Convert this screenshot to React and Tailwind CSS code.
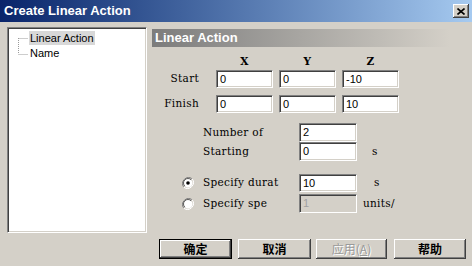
import React from 'react';

const sunken = 'border border-t-[#808080] border-l-[#808080] border-b-white border-r-white shadow-[inset_1px_1px_0_#404040,inset_-1px_-1px_0_#d4d0c8]';
const raised = 'shadow-[inset_-1px_-1px_0_#404040,inset_1px_1px_0_#ffffff,inset_-2px_-2px_0_#808080]';
const label = "font-['DejaVu_Serif',serif] text-[10.5px] tracking-[0.3px] text-black";
const sans = "font-['Liberation_Sans',Arial,sans-serif]";

function Field({ value, width = 'w-[57px]', height = 'h-[18px]', disabled }) {
    return (
        <div className={`${width} ${height} ${sunken} ${disabled ? 'bg-[#d4d0c8] text-[#a0a0a0]' : 'bg-white text-black'} ${sans} text-[11px] flex items-center pl-[3px]`}>
            {value}
        </div>
    );
}

function Radio({ checked }) {
    return (
        <svg width="12" height="12" viewBox="0 0 12 12">
            <path d="M10.2 1.8 A6 6 0 0 0 1.8 10.2" fill="none" stroke="#808080" strokeWidth="1" />
            <path d="M1.8 10.2 A6 6 0 0 0 10.2 1.8" fill="none" stroke="#ffffff" strokeWidth="1" />
            <circle cx="6" cy="6" r="4.5" fill="#ffffff" stroke="#404040" strokeWidth="0.8" strokeDasharray="14 14" transform="rotate(135 6 6)" />
            {checked && <circle cx="6" cy="6" r="1.8" fill="#000" />}
        </svg>
    );
}

function Btn({ children, width, isDefault, disabled }) {
    return (
        <div className={`${width} h-[20px] bg-[#d4d0c8] ${isDefault ? 'border border-black' : ''} ${raised} flex items-center justify-center font-['Noto_Sans_CJK_SC',sans-serif] text-[12px] font-bold ${disabled ? 'text-[#9a9a9a] font-normal [text-shadow:1px_1px_0_#fff]' : 'text-black'}`}>
            {children}
        </div>
    );
}

export default function App() {
    return (
        <div className="w-[472px] h-[266px] bg-[#d4d0c8] flex flex-col overflow-hidden">
            {/* title bar */}
            <div className="h-[22px] flex items-center justify-between pl-[4px] pr-[3px] bg-linear-to-r from-[#0a246a] to-[#a6caf0]">
                <span className={`${sans} text-white font-bold text-[13px]`}>Create Linear Action</span>
                <div className={`w-[16px] h-[14px] bg-[#d4d0c8] ${raised} flex items-center justify-center`}>
                    <svg width="8" height="7" viewBox="0 0 8 7">
                        <path d="M0.5 0.5 L7.5 6.5 M7.5 0.5 L0.5 6.5" stroke="#000" strokeWidth="1.6" />
                    </svg>
                </div>
            </div>

            <div className="flex flex-1">
                {/* tree */}
                <div className="w-[152px] pl-[7px] pt-[5px]">
                    <div className={`w-[140px] h-[206px] bg-white ${sunken} pt-[2px] pl-[9px]`}>
                        <div className="flex">
                            <svg width="12" height="32" viewBox="0 0 12 32" className="mt-[1px]">
                                <path d="M1.5 7 V23 M1.5 7.5 H11 M1.5 23.5 H11" stroke="#9a9a9a" strokeWidth="1" strokeDasharray="1 1" fill="none" />
                            </svg>
                            <div className={`${sans} text-[11px] text-black`}>
                                <div className="h-[14px] mt-[1px] px-[1px] bg-[#d8d8d8] flex items-center">Linear Action</div>
                                <div className="h-[16px] px-[1px] flex items-center">Name</div>
                            </div>
                        </div>
                    </div>
                </div>

                {/* right panel */}
                <div className="flex-1 pt-[7px] flex flex-col">
                    <div className={`h-[18px] w-[298px] bg-linear-to-r from-[#7c7c7c] via-[#a8a6a2] to-[#d4d0c8] pl-[3px] flex items-center ${sans} text-white font-bold text-[13px]`}>
                        Linear Action
                    </div>

                    <div className={`mt-[9px] h-[12px] flex items-center pl-[64px] gap-[6px] ${label} font-bold`}>
                        <div className="w-[57px] text-center">X</div>
                        <div className="w-[57px] text-center">Y</div>
                        <div className="w-[57px] text-center">Z</div>
                    </div>

                    <div className="mt-[2px] h-[18px] flex items-center">
                        <div className={`w-[47px] text-right ${label}`}>Start</div>
                        <div className="ml-[17px] flex gap-[6px]">
                            <Field value="0" />
                            <Field value="0" />
                            <Field value="-10" />
                        </div>
                    </div>

                    <div className="mt-[7px] h-[18px] flex items-center">
                        <div className={`w-[47px] text-right ${label}`}>Finish</div>
                        <div className="ml-[17px] flex gap-[6px]">
                            <Field value="0" />
                            <Field value="0" />
                            <Field value="10" />
                        </div>
                    </div>

                    <div className="mt-[10px] flex items-center pl-[51px]">
                        <div className={`w-[96px] ${label}`}>Number of</div>
                        <Field value="2" width="w-[58px]" height="h-[19px]" />
                    </div>
                    <div className="flex items-center pl-[51px]">
                        <div className={`w-[96px] ${label}`}>Starting</div>
                        <Field value="0" width="w-[58px]" height="h-[19px]" />
                        <div className={`ml-[15px] ${label}`}>s</div>
                    </div>

                    <div className="mt-[13px] flex items-center pl-[30px]">
                        <Radio checked />
                        <div className={`ml-[9px] w-[96px] ${label}`}>Specify durat</div>
                        <Field value="10" width="w-[58px]" height="h-[18px]" />
                        <div className={`ml-[17px] ${label}`}>s</div>
                    </div>
                    <div className="mt-[2px] flex items-center pl-[30px]">
                        <Radio />
                        <div className={`ml-[9px] w-[96px] ${label}`}>Specify spe</div>
                        <Field value="1" width="w-[58px]" height="h-[19px]" disabled />
                        <div className={`ml-[6px] ${label}`}>units/</div>
                    </div>

                    <div className="mt-auto mb-[7px] pl-[7px] flex">
                        <Btn width="w-[73px]" isDefault>确定</Btn>
                        <div className="ml-[6px]"><Btn width="w-[73px]">取消</Btn></div>
                        <div className="ml-[5px]"><Btn width="w-[71px]" disabled>应用(<u>A</u>)</Btn></div>
                        <div className="ml-[7px]"><Btn width="w-[72px]">帮助</Btn></div>
                    </div>
                </div>
            </div>
        </div>
    );
}
